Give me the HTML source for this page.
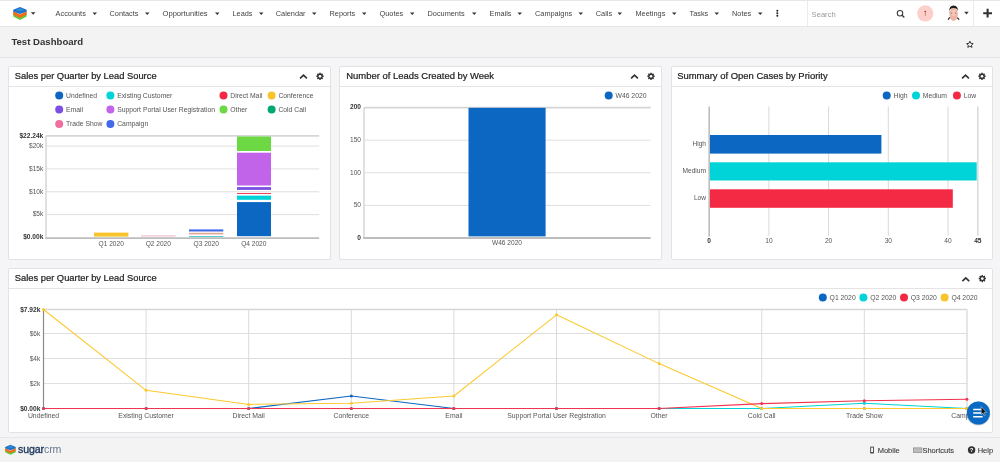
<!DOCTYPE html>
<html><head><meta charset="utf-8"><style>
html,body{margin:0;padding:0;}
body{width:1000px;height:462px;overflow:hidden;position:relative;background:#f5f5f7;font-family:"Liberation Sans", sans-serif;}
.abs{position:absolute;}
#nav{left:0;top:0;width:1000px;height:25px;background:#fff;border-top:1px solid #e8e8e8;border-bottom:1px solid #e6e6e6;}
#hdr{left:0;top:27px;width:1000px;height:30px;background:#f3f3f3;border-bottom:1px solid #e3e3e3;}
#foot{left:0;top:437px;width:1000px;height:25px;background:#f3f3f3;border-top:1px solid #e6e6e6;}
.panel{background:#fff;border:1px solid #e2e2e2;border-radius:2px;box-sizing:border-box;}
.ph{position:absolute;left:0;right:0;top:19px;border-top:1px solid #e4e4e4;}
#search{left:807px;top:1px;width:167px;height:25px;border-left:1px solid #ececec;border-right:1px solid #ececec;box-sizing:border-box;}
svg{position:absolute;left:0;top:0;will-change:transform;}
svg text{font-family:"Liberation Sans", sans-serif;}
</style></head><body>
<div id="nav" class="abs"></div>
<div id="search" class="abs"></div>
<div id="hdr" class="abs"></div>
<div class="abs panel" style="left:8px;top:66px;width:323px;height:194px"><div class="ph"></div></div>
<div class="abs panel" style="left:339px;top:66px;width:323px;height:194px"><div class="ph"></div></div>
<div class="abs panel" style="left:671px;top:66px;width:322px;height:194px"><div class="ph"></div></div>
<div class="abs panel" style="left:8px;top:268px;width:985px;height:165px"><div class="ph"></div></div>
<div id="foot" class="abs"></div>
<svg width="1000" height="462" viewBox="0 0 1000 462">
<text x="55.6" y="16.2" font-size="7.35" fill="#444" text-anchor="start" font-weight="normal" >Accounts</text>
<path d="M92.5,12.4 h4.5 l-2.25,2.6 z" fill="#333"/>
<text x="109.5" y="16.2" font-size="7.35" fill="#444" text-anchor="start" font-weight="normal" >Contacts</text>
<path d="M145,12.4 h4.5 l-2.25,2.6 z" fill="#333"/>
<text x="162.5" y="16.2" font-size="7.6" fill="#444" text-anchor="start" font-weight="normal" >Opportunities</text>
<path d="M215,12.4 h4.5 l-2.25,2.6 z" fill="#333"/>
<text x="232.5" y="16.2" font-size="7.35" fill="#444" text-anchor="start" font-weight="normal" >Leads</text>
<path d="M259,12.4 h4.5 l-2.25,2.6 z" fill="#333"/>
<text x="275.75" y="16.2" font-size="7.35" fill="#444" text-anchor="start" font-weight="normal" >Calendar</text>
<path d="M312,12.4 h4.5 l-2.25,2.6 z" fill="#333"/>
<text x="329.5" y="16.2" font-size="7.35" fill="#444" text-anchor="start" font-weight="normal" >Reports</text>
<path d="M362,12.4 h4.5 l-2.25,2.6 z" fill="#333"/>
<text x="379.5" y="16.2" font-size="7.35" fill="#444" text-anchor="start" font-weight="normal" >Quotes</text>
<path d="M410,12.4 h4.5 l-2.25,2.6 z" fill="#333"/>
<text x="427.5" y="16.2" font-size="7.35" fill="#444" text-anchor="start" font-weight="normal" >Documents</text>
<path d="M472,12.4 h4.5 l-2.25,2.6 z" fill="#333"/>
<text x="489.5" y="16.2" font-size="7.35" fill="#444" text-anchor="start" font-weight="normal" >Emails</text>
<path d="M517.5,12.4 h4.5 l-2.25,2.6 z" fill="#333"/>
<text x="535" y="16.2" font-size="7.35" fill="#444" text-anchor="start" font-weight="normal" >Campaigns</text>
<path d="M578.5,12.4 h4.5 l-2.25,2.6 z" fill="#333"/>
<text x="595.75" y="16.2" font-size="7.35" fill="#444" text-anchor="start" font-weight="normal" >Calls</text>
<path d="M617.5,12.4 h4.5 l-2.25,2.6 z" fill="#333"/>
<text x="635.5" y="16.2" font-size="7.35" fill="#444" text-anchor="start" font-weight="normal" >Meetings</text>
<path d="M672,12.4 h4.5 l-2.25,2.6 z" fill="#333"/>
<text x="689.5" y="16.2" font-size="7.35" fill="#444" text-anchor="start" font-weight="normal" >Tasks</text>
<path d="M714.5,12.4 h4.5 l-2.25,2.6 z" fill="#333"/>
<text x="732" y="16.2" font-size="7.35" fill="#444" text-anchor="start" font-weight="normal" >Notes</text>
<path d="M758,12.4 h4.5 l-2.25,2.6 z" fill="#333"/>
<g transform="translate(13.2,6.9) scale(1.0)"><path d="M0,6.2 L6.75,9.6 L13.5,6.2 L13.5,9.6 L6.75,13 L0,9.6 Z" fill="#5ccc3a"/><path d="M0,4.2 L6.75,7.6 L13.5,4.2 L13.5,7.6 L6.75,11 L0,7.6 Z" fill="#f46a1c"/><path d="M0,2.9 L6.75,0 L13.5,2.9 L13.5,4.6 L6.75,7.2 L0,4.6 Z" fill="#1b72c6"/><path d="M2.5,3 L6.75,1.2 L11,3 L6.75,4.6 Z" fill="#2f8ad8"/></g>
<path d="M30.9,12.2 h4.5 l-2.25,2.6 z" fill="#333"/>
<circle cx="777.3" cy="10.7" r="1.0" fill="#222"/>
<circle cx="777.3" cy="13.2" r="1.0" fill="#222"/>
<circle cx="777.3" cy="15.7" r="1.0" fill="#222"/>
<text x="811.6" y="16.6" font-size="7.6" fill="#999" text-anchor="start" font-weight="normal" >Search</text>
<circle cx="900" cy="13.2" r="2.75" fill="none" stroke="#3a3a3a" stroke-width="1.05"/><path d="M902,15.2 L903.9,17.1" stroke="#3a3a3a" stroke-width="1.4" stroke-linecap="round"/>
<circle cx="925.3" cy="13.4" r="8.1" fill="#fccfcb"/>
<path d="M925.4,11.6 L925.4,15.9" stroke="#c28a66" stroke-width="0.9" fill="none"/><rect x="924.4" y="10.9" width="1.6" height="1.1" fill="#c8282c"/>
<g><ellipse cx="953.6" cy="14.3" rx="4.2" ry="6.6" fill="#eeb4a4"/><ellipse cx="953.6" cy="13" rx="2.6" ry="3.2" fill="#f4c6b8"/><path d="M949.2,11.5 Q949,5.6 953.6,5.5 Q958.2,5.6 958,11.5 Q957.6,8.2 953.6,8 Q949.7,8.2 949.2,11.5 Z" fill="#231d1a"/><path d="M949.2,10 L949.6,13.5 L949.2,12.5 Z" fill="#8a6a30"/><circle cx="951.7" cy="13" r="0.5" fill="#4a4a55"/><circle cx="955.5" cy="13" r="0.5" fill="#4a4a55"/><path d="M948,19.6 L949.8,17.4" stroke="#222" stroke-width="1.2"/><path d="M959.2,19.6 L957.2,17.6" stroke="#222" stroke-width="1.2"/></g>
<path d="M964.2,11.8 h4.5 l-2.25,2.6 z" fill="#333"/>
<path d="M987.6,8.8 V17.6 M983.2,13.2 H992" stroke="#333" stroke-width="2.1"/>
<text x="11.4" y="45.2" font-size="9.6" fill="#333" text-anchor="start" font-weight="bold" >Test Dashboard</text>
<g transform="translate(969.9,44.2) scale(0.84) translate(-969.9,-44.2)"><path d="M969.9,40.6 L971.1,43.2 L973.8,43.5 L971.8,45.3 L972.4,48 L969.9,46.6 L967.4,48 L968,45.3 L966,43.5 L968.7,43.2 Z" fill="none" stroke="#333" stroke-width="1.15" stroke-linejoin="round"/></g>
<text x="14.8" y="78.8" font-size="9.35" fill="#1e1e1e" text-anchor="start" font-weight="normal" stroke="#1e1e1e" stroke-width="0.22">Sales per Quarter by Lead Source</text>
<path d="M300.1,78.39999999999999 L303.5,75.2 L306.90000000000003,78.39999999999999" fill="none" stroke="#333" stroke-width="1.7"/>
<path d="M322.39,75.56 L323.63,75.56 L323.63,77.04 L322.39,77.04 L322.21,77.47 L323.08,78.34 L322.04,79.38 L321.17,78.51 L320.74,78.69 L320.74,79.93 L319.26,79.93 L319.26,78.69 L318.83,78.51 L317.96,79.38 L316.92,78.34 L317.79,77.47 L317.61,77.04 L316.37,77.04 L316.37,75.56 L317.61,75.56 L317.79,75.13 L316.92,74.26 L317.96,73.22 L318.83,74.09 L319.26,73.91 L319.26,72.67 L320.74,72.67 L320.74,73.91 L321.17,74.09 L322.04,73.22 L323.08,74.26 L322.21,75.13 Z" fill="#333"/><circle cx="320" cy="76.3" r="2.7" fill="#333"/><circle cx="320" cy="76.3" r="1.35" fill="#fff"/>
<text x="346.3" y="78.8" font-size="9.45" fill="#1e1e1e" text-anchor="start" font-weight="normal" stroke="#1e1e1e" stroke-width="0.22">Number of Leads Created by Week</text>
<path d="M631.1,78.39999999999999 L634.5,75.2 L637.9,78.39999999999999" fill="none" stroke="#333" stroke-width="1.7"/>
<path d="M653.39,75.56 L654.63,75.56 L654.63,77.04 L653.39,77.04 L653.21,77.47 L654.08,78.34 L653.04,79.38 L652.17,78.51 L651.74,78.69 L651.74,79.93 L650.26,79.93 L650.26,78.69 L649.83,78.51 L648.96,79.38 L647.92,78.34 L648.79,77.47 L648.61,77.04 L647.37,77.04 L647.37,75.56 L648.61,75.56 L648.79,75.13 L647.92,74.26 L648.96,73.22 L649.83,74.09 L650.26,73.91 L650.26,72.67 L651.74,72.67 L651.74,73.91 L652.17,74.09 L653.04,73.22 L654.08,74.26 L653.21,75.13 Z" fill="#333"/><circle cx="651" cy="76.3" r="2.7" fill="#333"/><circle cx="651" cy="76.3" r="1.35" fill="#fff"/>
<text x="677.2" y="78.8" font-size="9.45" fill="#1e1e1e" text-anchor="start" font-weight="normal" stroke="#1e1e1e" stroke-width="0.22">Summary of Open Cases by Priority</text>
<path d="M962.1,78.39999999999999 L965.5,75.2 L968.9,78.39999999999999" fill="none" stroke="#333" stroke-width="1.7"/>
<path d="M984.39,75.56 L985.63,75.56 L985.63,77.04 L984.39,77.04 L984.21,77.47 L985.08,78.34 L984.04,79.38 L983.17,78.51 L982.74,78.69 L982.74,79.93 L981.26,79.93 L981.26,78.69 L980.83,78.51 L979.96,79.38 L978.92,78.34 L979.79,77.47 L979.61,77.04 L978.37,77.04 L978.37,75.56 L979.61,75.56 L979.79,75.13 L978.92,74.26 L979.96,73.22 L980.83,74.09 L981.26,73.91 L981.26,72.67 L982.74,72.67 L982.74,73.91 L983.17,74.09 L984.04,73.22 L985.08,74.26 L984.21,75.13 Z" fill="#333"/><circle cx="982" cy="76.3" r="2.7" fill="#333"/><circle cx="982" cy="76.3" r="1.35" fill="#fff"/>
<text x="14.8" y="281.3" font-size="9.35" fill="#1e1e1e" text-anchor="start" font-weight="normal" stroke="#1e1e1e" stroke-width="0.22">Sales per Quarter by Lead Source</text>
<path d="M962.4,281.20000000000005 L965.8,278.0 L969.1999999999999,281.20000000000005" fill="none" stroke="#333" stroke-width="1.7"/>
<path d="M984.69,277.86 L985.93,277.86 L985.93,279.34 L984.69,279.34 L984.51,279.77 L985.38,280.64 L984.34,281.68 L983.47,280.81 L983.04,280.99 L983.04,282.23 L981.56,282.23 L981.56,280.99 L981.13,280.81 L980.26,281.68 L979.22,280.64 L980.09,279.77 L979.91,279.34 L978.67,279.34 L978.67,277.86 L979.91,277.86 L980.09,277.43 L979.22,276.56 L980.26,275.52 L981.13,276.39 L981.56,276.21 L981.56,274.97 L983.04,274.97 L983.04,276.21 L983.47,276.39 L984.34,275.52 L985.38,276.56 L984.51,277.43 Z" fill="#333"/><circle cx="982.3" cy="278.6" r="2.7" fill="#333"/><circle cx="982.3" cy="278.6" r="1.35" fill="#fff"/>
<circle cx="59.2" cy="95.4" r="4" fill="#0b67c2"/>
<text x="66.0" y="97.9" font-size="6.8" fill="#555" text-anchor="start" font-weight="normal" >Undefined</text>
<circle cx="110.4" cy="95.4" r="4" fill="#00d4d8"/>
<text x="117.2" y="97.9" font-size="6.8" fill="#555" text-anchor="start" font-weight="normal" >Existing Customer</text>
<circle cx="223.5" cy="95.4" r="4" fill="#f42a45"/>
<text x="230.3" y="97.9" font-size="6.8" fill="#555" text-anchor="start" font-weight="normal" >Direct Mail</text>
<circle cx="271.6" cy="95.4" r="4" fill="#f9c42b"/>
<text x="278.40000000000003" y="97.9" font-size="6.8" fill="#555" text-anchor="start" font-weight="normal" >Conference</text>
<circle cx="59.2" cy="109.6" r="4" fill="#7b4fe6"/>
<text x="66.0" y="112.1" font-size="6.8" fill="#555" text-anchor="start" font-weight="normal" >Email</text>
<circle cx="110.4" cy="109.6" r="4" fill="#c264ea"/>
<text x="117.2" y="112.1" font-size="6.8" fill="#555" text-anchor="start" font-weight="normal" >Support Portal User Registration</text>
<circle cx="223.5" cy="109.6" r="4" fill="#6bd844"/>
<text x="230.3" y="112.1" font-size="6.8" fill="#555" text-anchor="start" font-weight="normal" >Other</text>
<circle cx="271.6" cy="109.6" r="4" fill="#00a874"/>
<text x="278.40000000000003" y="112.1" font-size="6.8" fill="#555" text-anchor="start" font-weight="normal" >Cold Call</text>
<circle cx="59.2" cy="123.9" r="4" fill="#f06fa0"/>
<text x="66.0" y="126.4" font-size="6.8" fill="#555" text-anchor="start" font-weight="normal" >Trade Show</text>
<circle cx="110.4" cy="123.9" r="4" fill="#4169e8"/>
<text x="117.2" y="126.4" font-size="6.8" fill="#555" text-anchor="start" font-weight="normal" >Campaign</text>
<line x1="46" y1="214.65" x2="319.2" y2="214.65" stroke="#dfdfdf" stroke-width="1"/>
<text x="43.3" y="216.35" font-size="6.6" fill="#555" text-anchor="end" font-weight="normal" >$5k</text>
<line x1="46" y1="191.80" x2="319.2" y2="191.80" stroke="#dfdfdf" stroke-width="1"/>
<text x="43.3" y="193.5" font-size="6.6" fill="#555" text-anchor="end" font-weight="normal" >$10k</text>
<line x1="46" y1="168.95" x2="319.2" y2="168.95" stroke="#dfdfdf" stroke-width="1"/>
<text x="43.3" y="170.64999999999998" font-size="6.6" fill="#555" text-anchor="end" font-weight="normal" >$15k</text>
<line x1="46" y1="146.10" x2="319.2" y2="146.10" stroke="#dfdfdf" stroke-width="1"/>
<text x="43.3" y="147.79999999999998" font-size="6.6" fill="#555" text-anchor="end" font-weight="normal" >$20k</text>
<line x1="46" y1="135.86" x2="319.2" y2="135.86" stroke="#d6d6d6" stroke-width="1.6"/>
<text x="43.3" y="137.66320000000002" font-size="6.6" fill="#333" text-anchor="end" font-weight="bold" >$22.24k</text>
<text x="43.3" y="239.3" font-size="6.6" fill="#333" text-anchor="end" font-weight="bold" >$0.00k</text>
<line x1="46" y1="135.86" x2="46" y2="237.5" stroke="#d9d9d9" stroke-width="1.6"/>
<rect x="94" y="232.6" width="34.40" height="4.00" fill="#f9c42b"/>
<rect x="141" y="235" width="34.60" height="1.80" fill="#f4d4dc"/>
<rect x="189" y="229.4" width="34.30" height="2.10" fill="#4169e8"/>
<rect x="189" y="232.8" width="34.30" height="1.10" fill="#dca27e"/>
<rect x="189" y="234.2" width="34.30" height="0.80" fill="#f9c9d2"/>
<rect x="189" y="236" width="34.30" height="0.90" fill="#3dc8c8"/>
<rect x="237" y="136.5" width="34.00" height="14.50" fill="#6bd844"/>
<rect x="237" y="152.7" width="34.00" height="32.80" fill="#c264ea"/>
<rect x="237" y="187.1" width="34.00" height="2.80" fill="#7b4fe6"/>
<rect x="237" y="193.1" width="34.00" height="0.90" fill="#f42a45"/>
<rect x="237" y="195.6" width="34.00" height="4.20" fill="#00d4d8"/>
<rect x="237" y="202.1" width="34.00" height="34.10" fill="#0b67c2"/>
<line x1="45.2" y1="238.1" x2="319.2" y2="238.1" stroke="#bdbdbd" stroke-width="1.8"/>
<text x="111.2" y="245.6" font-size="6.6" fill="#555" text-anchor="middle" font-weight="normal" >Q1 2020</text>
<text x="158.3" y="245.6" font-size="6.6" fill="#555" text-anchor="middle" font-weight="normal" >Q2 2020</text>
<text x="206.2" y="245.6" font-size="6.6" fill="#555" text-anchor="middle" font-weight="normal" >Q3 2020</text>
<text x="253.8" y="245.6" font-size="6.6" fill="#555" text-anchor="middle" font-weight="normal" >Q4 2020</text>
<circle cx="608.7" cy="95.5" r="4" fill="#0b67c2"/>
<text x="615.5" y="98.0" font-size="6.8" fill="#555" text-anchor="start" font-weight="normal" >W46 2020</text>
<line x1="364" y1="205.40" x2="650.7" y2="205.40" stroke="#dfdfdf" stroke-width="1"/>
<text x="361" y="207.1" font-size="6.6" fill="#555" text-anchor="end" font-weight="normal" >50</text>
<line x1="364" y1="172.80" x2="650.7" y2="172.80" stroke="#dfdfdf" stroke-width="1"/>
<text x="361" y="174.5" font-size="6.6" fill="#555" text-anchor="end" font-weight="normal" >100</text>
<line x1="364" y1="140.20" x2="650.7" y2="140.20" stroke="#dfdfdf" stroke-width="1"/>
<text x="361" y="141.89999999999998" font-size="6.6" fill="#555" text-anchor="end" font-weight="normal" >150</text>
<line x1="364" y1="107.60" x2="650.7" y2="107.60" stroke="#d6d6d6" stroke-width="1.6"/>
<text x="361" y="109.39999999999999" font-size="6.6" fill="#333" text-anchor="end" font-weight="bold" >200</text>
<text x="361" y="239.8" font-size="6.6" fill="#333" text-anchor="end" font-weight="bold" >0</text>
<line x1="364" y1="107.60" x2="364" y2="238" stroke="#d9d9d9" stroke-width="1.6"/>
<rect x="468.5" y="107.8" width="77.10" height="128.60" fill="#0b67c2"/>
<line x1="363.2" y1="238" x2="650.7" y2="238" stroke="#bdbdbd" stroke-width="1.8"/>
<text x="507" y="245.1" font-size="6.6" fill="#555" text-anchor="middle" font-weight="normal" >W46 2020</text>
<circle cx="886.7" cy="95.5" r="4" fill="#0b67c2"/>
<text x="893.5" y="98.0" font-size="6.8" fill="#555" text-anchor="start" font-weight="normal" >High</text>
<circle cx="916" cy="95.5" r="4" fill="#00d4d8"/>
<text x="922.8" y="98.0" font-size="6.8" fill="#555" text-anchor="start" font-weight="normal" >Medium</text>
<circle cx="956.9" cy="95.5" r="4" fill="#f42a45"/>
<text x="963.6999999999999" y="98.0" font-size="6.8" fill="#555" text-anchor="start" font-weight="normal" >Low</text>
<line x1="768.90" y1="106.5" x2="768.90" y2="235.7" stroke="#d8d8d8" stroke-width="1"/>
<text x="768.9000000000001" y="243.4" font-size="6.6" fill="#555" text-anchor="middle" font-weight="normal" >10</text>
<line x1="828.60" y1="106.5" x2="828.60" y2="235.7" stroke="#d8d8d8" stroke-width="1"/>
<text x="828.6" y="243.4" font-size="6.6" fill="#555" text-anchor="middle" font-weight="normal" >20</text>
<line x1="888.30" y1="106.5" x2="888.30" y2="235.7" stroke="#d8d8d8" stroke-width="1"/>
<text x="888.3000000000001" y="243.4" font-size="6.6" fill="#555" text-anchor="middle" font-weight="normal" >30</text>
<line x1="948.00" y1="106.5" x2="948.00" y2="235.7" stroke="#d8d8d8" stroke-width="1"/>
<text x="948.0" y="243.4" font-size="6.6" fill="#555" text-anchor="middle" font-weight="normal" >40</text>
<line x1="977.85" y1="106.5" x2="977.85" y2="235.7" stroke="#d6d6d6" stroke-width="1.4"/>
<text x="977.85" y="243.4" font-size="6.6" fill="#333" text-anchor="middle" font-weight="bold" >45</text>
<text x="709.2" y="243.4" font-size="6.6" fill="#333" text-anchor="middle" font-weight="bold" >0</text>
<rect x="709.7" y="135" width="171.70" height="18.60" fill="#0b67c2"/>
<rect x="709.7" y="162.3" width="267.00" height="18.20" fill="#00d4d8"/>
<rect x="709.7" y="189.3" width="243.10" height="18.50" fill="#f42a45"/>
<line x1="709.2" y1="106.5" x2="709.2" y2="236.6" stroke="#bdbdbd" stroke-width="1.6"/>
<text x="706" y="145.5" font-size="6.6" fill="#555" text-anchor="end" font-weight="normal" >High</text>
<text x="706" y="173.0" font-size="6.6" fill="#555" text-anchor="end" font-weight="normal" >Medium</text>
<text x="706" y="199.6" font-size="6.6" fill="#555" text-anchor="end" font-weight="normal" >Low</text>
<circle cx="822.8" cy="297.4" r="4" fill="#0b67c2"/>
<text x="829.5999999999999" y="299.9" font-size="6.8" fill="#555" text-anchor="start" font-weight="normal" >Q1 2020</text>
<circle cx="863.4" cy="297.4" r="4" fill="#00d4d8"/>
<text x="870.1999999999999" y="299.9" font-size="6.8" fill="#555" text-anchor="start" font-weight="normal" >Q2 2020</text>
<circle cx="904" cy="297.4" r="4" fill="#f42a45"/>
<text x="910.8" y="299.9" font-size="6.8" fill="#555" text-anchor="start" font-weight="normal" >Q3 2020</text>
<circle cx="944.6" cy="297.4" r="4" fill="#f9c42b"/>
<text x="951.4" y="299.9" font-size="6.8" fill="#555" text-anchor="start" font-weight="normal" >Q4 2020</text>
<line x1="43.5" y1="383.50" x2="967" y2="383.50" stroke="#dfdfdf" stroke-width="1"/>
<text x="40.3" y="385.8" font-size="6.6" fill="#555" text-anchor="end" font-weight="normal" >$2k</text>
<line x1="43.5" y1="358.50" x2="967" y2="358.50" stroke="#dfdfdf" stroke-width="1"/>
<text x="40.3" y="360.8" font-size="6.6" fill="#555" text-anchor="end" font-weight="normal" >$4k</text>
<line x1="43.5" y1="333.50" x2="967" y2="333.50" stroke="#dfdfdf" stroke-width="1"/>
<text x="40.3" y="335.8" font-size="6.6" fill="#555" text-anchor="end" font-weight="normal" >$6k</text>
<line x1="146.10" y1="309.50" x2="146.10" y2="408.5" stroke="#dadada" stroke-width="1"/>
<line x1="248.70" y1="309.50" x2="248.70" y2="408.5" stroke="#dadada" stroke-width="1"/>
<line x1="351.30" y1="309.50" x2="351.30" y2="408.5" stroke="#dadada" stroke-width="1"/>
<line x1="453.90" y1="309.50" x2="453.90" y2="408.5" stroke="#dadada" stroke-width="1"/>
<line x1="556.50" y1="309.50" x2="556.50" y2="408.5" stroke="#dadada" stroke-width="1"/>
<line x1="659.10" y1="309.50" x2="659.10" y2="408.5" stroke="#dadada" stroke-width="1"/>
<line x1="761.70" y1="309.50" x2="761.70" y2="408.5" stroke="#dadada" stroke-width="1"/>
<line x1="864.30" y1="309.50" x2="864.30" y2="408.5" stroke="#dadada" stroke-width="1"/>
<line x1="967" y1="309.50" x2="967" y2="408.5" stroke="#d6d6d6" stroke-width="1.2"/>
<line x1="43.5" y1="309.50" x2="967" y2="309.50" stroke="#d6d6d6" stroke-width="1.6"/>
<text x="40.3" y="312.1" font-size="6.6" fill="#333" text-anchor="end" font-weight="bold" >$7.92k</text>
<text x="40.3" y="411.1" font-size="6.6" fill="#333" text-anchor="end" font-weight="bold" >$0.00k</text>
<line x1="43.5" y1="309.50" x2="43.5" y2="408.5" stroke="#8a8a8a" stroke-width="1.2"/>
<text x="43.50" y="417.6" font-size="6.85" fill="#555" text-anchor="middle" font-weight="normal" >Undefined</text>
<text x="146.10" y="417.6" font-size="6.85" fill="#555" text-anchor="middle" font-weight="normal" >Existing Customer</text>
<text x="248.70" y="417.6" font-size="6.85" fill="#555" text-anchor="middle" font-weight="normal" >Direct Mail</text>
<text x="351.30" y="417.6" font-size="6.85" fill="#555" text-anchor="middle" font-weight="normal" >Conference</text>
<text x="453.90" y="417.6" font-size="6.85" fill="#555" text-anchor="middle" font-weight="normal" >Email</text>
<text x="556.50" y="417.6" font-size="6.85" fill="#555" text-anchor="middle" font-weight="normal" >Support Portal User Registration</text>
<text x="659.10" y="417.6" font-size="6.85" fill="#555" text-anchor="middle" font-weight="normal" >Other</text>
<text x="761.70" y="417.6" font-size="6.85" fill="#555" text-anchor="middle" font-weight="normal" >Cold Call</text>
<text x="864.30" y="417.6" font-size="6.85" fill="#555" text-anchor="middle" font-weight="normal" >Trade Show</text>
<text x="966.90" y="417.6" font-size="6.85" fill="#555" text-anchor="middle" font-weight="normal" >Campaign</text>
<polyline points="43.50,408.50 146.10,408.50 248.70,408.50 351.30,396.00 453.90,408.50 556.50,408.50 659.10,408.50 761.70,408.50 864.30,408.50 966.90,408.50" fill="none" stroke="#0b67c2" stroke-width="1.05" stroke-linejoin="round"/>
<circle cx="43.50" cy="408.50" r="1.5" fill="#0b67c2"/>
<circle cx="146.10" cy="408.50" r="1.5" fill="#0b67c2"/>
<circle cx="248.70" cy="408.50" r="1.5" fill="#0b67c2"/>
<circle cx="351.30" cy="396.00" r="1.5" fill="#0b67c2"/>
<circle cx="453.90" cy="408.50" r="1.5" fill="#0b67c2"/>
<circle cx="556.50" cy="408.50" r="1.5" fill="#0b67c2"/>
<circle cx="659.10" cy="408.50" r="1.5" fill="#0b67c2"/>
<circle cx="761.70" cy="408.50" r="1.5" fill="#0b67c2"/>
<circle cx="864.30" cy="408.50" r="1.5" fill="#0b67c2"/>
<circle cx="966.90" cy="408.50" r="1.5" fill="#0b67c2"/>
<polyline points="43.50,408.50 146.10,408.50 248.70,408.50 351.30,408.50 453.90,408.50 556.50,408.50 659.10,408.50 761.70,408.50 864.30,403.20 966.90,408.50" fill="none" stroke="#00d4d8" stroke-width="1.05" stroke-linejoin="round"/>
<circle cx="43.50" cy="408.50" r="1.5" fill="#00d4d8"/>
<circle cx="146.10" cy="408.50" r="1.5" fill="#00d4d8"/>
<circle cx="248.70" cy="408.50" r="1.5" fill="#00d4d8"/>
<circle cx="351.30" cy="408.50" r="1.5" fill="#00d4d8"/>
<circle cx="453.90" cy="408.50" r="1.5" fill="#00d4d8"/>
<circle cx="556.50" cy="408.50" r="1.5" fill="#00d4d8"/>
<circle cx="659.10" cy="408.50" r="1.5" fill="#00d4d8"/>
<circle cx="761.70" cy="408.50" r="1.5" fill="#00d4d8"/>
<circle cx="864.30" cy="403.20" r="1.5" fill="#00d4d8"/>
<circle cx="966.90" cy="408.50" r="1.5" fill="#00d4d8"/>
<polyline points="43.50,309.50 146.10,390.30 248.70,404.40 351.30,403.20 453.90,396.00 556.50,314.80 659.10,363.60 761.70,408.50 864.30,408.50 966.90,408.50" fill="none" stroke="#fbc92e" stroke-width="1.05" stroke-linejoin="round"/>
<circle cx="43.50" cy="309.50" r="1.5" fill="#fbc92e"/>
<circle cx="146.10" cy="390.30" r="1.5" fill="#fbc92e"/>
<circle cx="248.70" cy="404.40" r="1.5" fill="#fbc92e"/>
<circle cx="351.30" cy="403.20" r="1.5" fill="#fbc92e"/>
<circle cx="453.90" cy="396.00" r="1.5" fill="#fbc92e"/>
<circle cx="556.50" cy="314.80" r="1.5" fill="#fbc92e"/>
<circle cx="659.10" cy="363.60" r="1.5" fill="#fbc92e"/>
<circle cx="761.70" cy="408.50" r="1.5" fill="#fbc92e"/>
<circle cx="864.30" cy="408.50" r="1.5" fill="#fbc92e"/>
<circle cx="966.90" cy="408.50" r="1.5" fill="#fbc92e"/>
<polyline points="43.50,408.50 146.10,408.50 248.70,408.50 351.30,408.50 453.90,408.50 556.50,408.50 659.10,408.50 761.70,403.60 864.30,400.80 966.90,399.30" fill="none" stroke="#f2334d" stroke-width="1.1" stroke-linejoin="round"/>
<circle cx="43.50" cy="408.50" r="1.5" fill="#f2334d"/>
<circle cx="146.10" cy="408.50" r="1.5" fill="#f2334d"/>
<circle cx="248.70" cy="408.50" r="1.5" fill="#f2334d"/>
<circle cx="351.30" cy="408.50" r="1.5" fill="#f2334d"/>
<circle cx="453.90" cy="408.50" r="1.5" fill="#f2334d"/>
<circle cx="556.50" cy="408.50" r="1.5" fill="#f2334d"/>
<circle cx="659.10" cy="408.50" r="1.5" fill="#f2334d"/>
<circle cx="761.70" cy="403.60" r="1.5" fill="#f2334d"/>
<circle cx="864.30" cy="400.80" r="1.5" fill="#f2334d"/>
<circle cx="966.90" cy="399.30" r="1.5" fill="#f2334d"/>
<circle cx="978.3" cy="413.6" r="12" fill="rgba(0,0,0,0.18)"/>
<circle cx="978.4" cy="413" r="11.5" fill="#0a6ac3"/>
<path d="M973.2,409.4 H982.6 M973.2,412.9 H982.6 M973.2,416.7 H982.6" stroke="#fff" stroke-width="1.5"/>
<path d="M981.2,406.6 L981.2,414.6 L983,413 L984.3,415.8 L985.3,415.3 L984.1,412.6 L986.5,412.4 Z" fill="#111" stroke="#cfe6f5" stroke-width="0.5"/>
<g transform="translate(5.2,444.7) scale(0.78)"><path d="M0,6.2 L6.75,9.6 L13.5,6.2 L13.5,9.6 L6.75,13 L0,9.6 Z" fill="#5ccc3a"/><path d="M0,4.2 L6.75,7.6 L13.5,4.2 L13.5,7.6 L6.75,11 L0,7.6 Z" fill="#f46a1c"/><path d="M0,2.9 L6.75,0 L13.5,2.9 L13.5,4.6 L6.75,7.2 L0,4.6 Z" fill="#1b72c6"/><path d="M2.5,3 L6.75,1.2 L11,3 L6.75,4.6 Z" fill="#2f8ad8"/></g>
<text x="18" y="452.8" font-size="10.6" fill="#1f3b60" stroke="#1f3b60" stroke-width="0.35" letter-spacing="-0.1">sugar<tspan fill="#687a92" stroke="none">crm</tspan></text>
<rect x="870.7" y="447.1" width="2.7" height="5.9" fill="#fff" stroke="#333" stroke-width="0.85"/><rect x="871" y="452" width="2.1" height="0.8" fill="#333"/>
<text x="877.7" y="452.9" font-size="7.5" fill="#3a3a3a" text-anchor="start" font-weight="normal" stroke="#3a3a3a" stroke-width="0.1">Mobile</text>
<rect x="913.4" y="447.9" width="8.4" height="4.6" fill="#c4c4c4" stroke="#888" stroke-width="0.7"/><path d="M914.6,449.3 H920.6 M914.6,450.9 H920.6" stroke="#999" stroke-width="0.5" stroke-dasharray="0.8,0.6"/>
<text x="922.4" y="452.9" font-size="7.5" fill="#3a3a3a" text-anchor="start" font-weight="normal" stroke="#3a3a3a" stroke-width="0.1">Shortcuts</text>
<circle cx="971.6" cy="450" r="3.7" fill="#333"/>
<text x="971.6" y="452.3" font-size="6" font-weight="bold" fill="#fff" text-anchor="middle">?</text>
<text x="977.7" y="452.9" font-size="7.5" fill="#3a3a3a" text-anchor="start" font-weight="normal" stroke="#3a3a3a" stroke-width="0.1">Help</text>
</svg>
</body></html>
